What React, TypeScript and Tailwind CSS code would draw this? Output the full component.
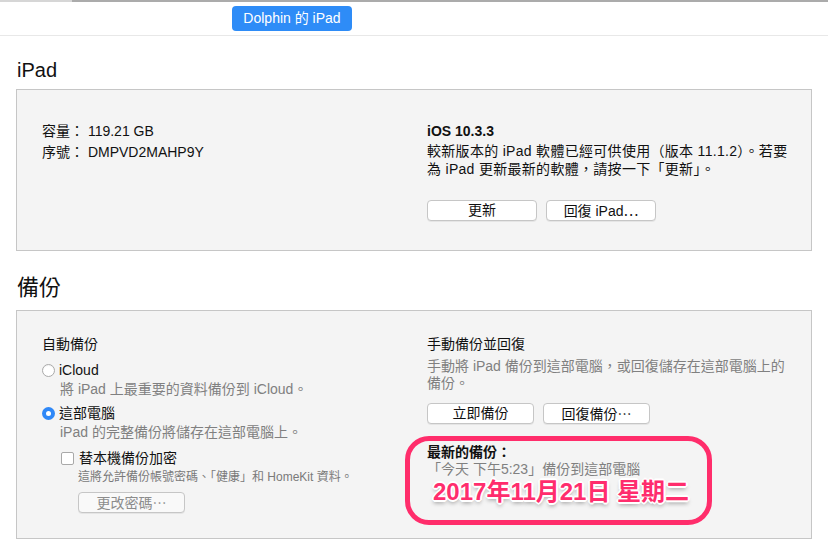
import React from 'react';

const font = { fontFamily: '"Liberation Sans", "Noto Sans CJK TC", sans-serif' };

function Dots() {
  return <span style={{ fontFamily: '"Noto Sans CJK TC", sans-serif' }}>⋯</span>;
}

function MacButton({ label, width, disabled, dots }: { label: string; width: string; disabled?: boolean; dots?: boolean }) {
  return (
    <button
      className={`${width} h-[21px] rounded-[4px] border border-[#c6c6c6] text-[14px] leading-[19px] shadow-[0_1px_0_rgba(0,0,0,0.06)] ${
        disabled ? 'bg-[#f9f9f9] text-[#8c8c8c]' : 'bg-white text-[#111]'
      }`}
    >
      {label}
      {dots && <Dots />}
    </button>
  );
}

function Radio({ checked }: { checked?: boolean }) {
  return checked ? (
    <span className="flex h-[13px] w-[13px] items-center justify-center rounded-full bg-[#2f88f7]">
      <span className="h-[5px] w-[5px] rounded-full bg-white" />
    </span>
  ) : (
    <span className="h-[13px] w-[13px] rounded-full border border-[#a9a9a9] bg-white shadow-[inset_0_1px_1px_rgba(0,0,0,0.05)]" />
  );
}

export default function App() {
  return (
    <div className="h-[548px] w-[828px] overflow-hidden bg-white text-[#111]" style={font}>
      {/* top edge */}
      <div className="flex h-[2px]">
        <div className="w-[72px] bg-[#d6d6d6]" />
        <div className="flex-1 bg-[#ababab]" />
      </div>

      {/* device tab */}
      <div className="flex h-[34px] border-b border-[#e8e8e8] pl-[232px] pt-[4px]">
        <div className="flex h-[25px] w-[120px] items-center justify-center rounded-[4px] bg-[#2e8cf7] text-[14px] text-white">
          Dolphin 的 iPad
        </div>
      </div>

      <div className="px-4">
        <h2 className="mt-[20px] mb-[5px] pl-[1px] text-[20px] leading-[28px]">iPad</h2>

        <div className="grid h-[162px] grid-cols-[385px_1fr] border border-[#c6c6c6] bg-[#f4f4f4] pl-[25px] pt-[31px]">
          <div className="text-[14px] leading-[21px]">
            <div>容量： 119.21 GB</div>
            <div>序號： DMPVD2MAHP9Y</div>
          </div>
          <div className="flex flex-col text-[14px]">
            <div className="font-bold leading-[21px]">iOS 10.3.3</div>
            <div className="whitespace-nowrap leading-[18px] tracking-[0.3px]">
              較新版本的 iPad 軟體已經可供使用（版本 11.1.2）。若要
              <br />
              為 iPad 更新最新的軟體，請按一下「更新」。
            </div>
            <div className="mt-[22px] flex gap-[9px]">
              <MacButton label="更新" width="w-[110px]" />
              <MacButton label="回復 iPad" width="w-[110px]" dots />
            </div>
          </div>
        </div>

        <h2 className="mt-[22px] mb-[7px] pl-[1px] text-[22px] leading-[30px]">備份</h2>

        <div className="relative grid h-[229px] grid-cols-[385px_1fr] border border-[#c6c6c6] bg-[#f4f4f4] pl-[25px] pt-[23px]">
          <div className="flex flex-col text-[14px]">
            <div className="leading-[20px]">自動備份</div>
            <div className="mt-[6px] flex items-center gap-[4px] leading-[20px]">
              <Radio />
              <span>iCloud</span>
            </div>
            <div className="pl-[18px] leading-[18px] text-[#808080]">將 iPad 上最重要的資料備份到 iCloud。</div>
            <div className="mt-[5px] flex items-center gap-[4px] leading-[20px]">
              <Radio checked />
              <span>這部電腦</span>
            </div>
            <div className="pl-[18px] leading-[18px] text-[#808080]">iPad 的完整備份將儲存在這部電腦上。</div>
            <div className="mt-[7px] flex items-center gap-[5px] pl-[19px] leading-[20px]">
              <span className="h-[13px] w-[13px] rounded-[2px] border border-[#a9a9a9] bg-white" />
              <span>替本機備份加密</span>
            </div>
            <div className="mt-[1px] pl-[36px] text-[12px] leading-[16px] text-[#7a7a7a]">
              這將允許備份帳號密碼、「健康」和 HomeKit 資料。
            </div>
            <div className="mt-[7px] pl-[36px]">
              <MacButton label="更改密碼" width="w-[107px]" disabled dots />
            </div>
          </div>

          <div className="flex flex-col text-[14px]">
            <div className="leading-[20px]">手動備份並回復</div>
            <div className="mt-[4px] whitespace-nowrap leading-[17px] text-[#808080]">
              手動將 iPad 備份到這部電腦，或回復儲存在這部電腦上的
              <br />
              備份。
            </div>
            <div className="mt-[11px] flex gap-[9px]">
              <MacButton label="立即備份" width="w-[107px]" />
              <MacButton label="回復備份" width="w-[107px]" dots />
            </div>
            <div className="mt-[19px] font-semibold leading-[18px]">最新的備份：</div>
            <div className="leading-[17px] text-[#808080]">「今天 下午5:23」備份到這部電腦</div>
            <div
              className="pl-[6px] text-[24px] font-bold leading-[28px] text-[#ff2d6d] [text-shadow:1px_1px_0_#fff,-1px_-1px_0_#fff,1px_-1px_0_#fff,-1px_1px_0_#fff,0_2px_0_#fff,2px_0_0_#fff,-2px_0_0_#fff,0_-2px_0_#fff,0_3px_4px_rgba(0,0,0,0.4)]"
            >
              2017年11月21日 星期二
            </div>
          </div>

          {/* annotation outline */}
          <div className="pointer-events-none absolute left-[388px] top-[125px] h-[89px] w-[307px] rounded-[24px] border-[5px] border-[#ff2d6b]" />
        </div>
      </div>
    </div>
  );
}
